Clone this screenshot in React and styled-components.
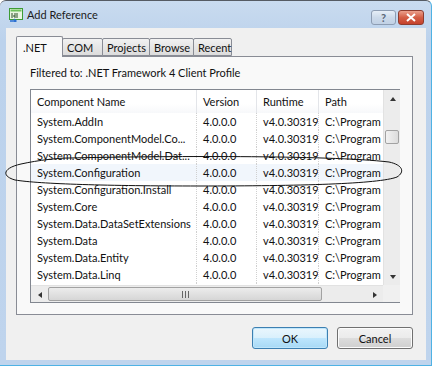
import React from "react";
import styled, { createGlobalStyle } from "styled-components";

const tabsData = [
  { id: 1, name: ".NET", width: 47, active: true },
  { id: 2, name: "COM", width: 41 },
  { id: 3, name: "Projects", width: 48 },
  { id: 4, name: "Browse", width: 45 },
  { id: 5, name: "Recent", width: 39 },
];

const columnsData = [
  { id: 1, name: "Component Name", width: 166 },
  { id: 2, name: "Version", width: 60 },
  { id: 3, name: "Runtime", width: 62 },
  { id: 4, name: "Path", width: 120 },
];

const rowsData = [
  "System.AddIn",
  "System.ComponentModel.Co...",
  "System.ComponentModel.Dat...",
  "System.Configuration",
  "System.Configuration.Install",
  "System.Core",
  "System.Data.DataSetExtensions",
  "System.Data",
  "System.Data.Entity",
  "System.Data.Linq",
  "System.Data.Services.Client",
];

export default function App() {
  return (
    <>
      <Page />
      <Window>
        <TitleBar>
          <TitleIcon viewBox="0 0 14 14" width="14" height="14">
            <rect x="0.5" y="0.5" width="13" height="11" fill="#eaf6e2" stroke="#3d9b35" />
            <rect x="1.5" y="1.5" width="11" height="2" fill="#6cc05a" />
            <path d="M3 5v5M6 5v5M8 5v5M4 8h2" stroke="#2f4f2a" strokeWidth="1" />
            <path d="M1 13h6M5 11l2 2-2 2" stroke="#2a6fd1" strokeWidth="1.4" fill="none" />
          </TitleIcon>
          <Title>Add Reference</Title>
          <Controls>
            <CaptionButton>?</CaptionButton>
            <CaptionButton close>
              <svg width="10" height="9" viewBox="0 0 10 9">
                <path d="M1 1l8 7M9 1l-8 7" stroke="#fff" strokeWidth="2" />
              </svg>
            </CaptionButton>
          </Controls>
        </TitleBar>

        <Client>
          <Tabs>
            {tabsData.map((tab) => (
              <Tab key={tab.id} active={tab.active} width={tab.width}>
                {tab.name}
              </Tab>
            ))}
          </Tabs>
          <Panel>
            <Filter>Filtered to: .NET Framework 4 Client Profile</Filter>
            <ListBox>
              <ListArea>
                <HeaderRow>
                  {columnsData.map((col) => (
                    <HeaderCell key={col.id} width={col.width}>
                      {col.name}
                    </HeaderCell>
                  ))}
                </HeaderRow>
                {rowsData.map((name, i) => (
                  <Row key={name} hot={i === 3}>
                    <Cell width={166}>{name}</Cell>
                    <Cell width={60}>4.0.0.0</Cell>
                    <Cell width={62}>v4.0.30319</Cell>
                    <Cell width={120}>C:\Program Files</Cell>
                  </Row>
                ))}
              </ListArea>
              <VScroll>
                <ArrowButton>
                  <Triangle dir="up" />
                </ArrowButton>
                <VTrack>
                  <VThumb />
                </VTrack>
                <ArrowButton>
                  <Triangle dir="down" />
                </ArrowButton>
              </VScroll>
              <HScroll>
                <ArrowButton>
                  <Triangle dir="left" />
                </ArrowButton>
                <HTrack>
                  <HThumb>
                    <Grip />
                  </HThumb>
                </HTrack>
                <ArrowButton>
                  <Triangle dir="right" />
                </ArrowButton>
              </HScroll>
              <Corner />
            </ListBox>
          </Panel>
          <Buttons>
            <Button primary>OK</Button>
            <Button>Cancel</Button>
          </Buttons>
        </Client>

        <Annotation viewBox="0 0 432 366" width="432" height="366">
          <path
            d="M70 158 C 160 156, 330 155, 390 162 C 404 165, 406 172, 398 177 C 380 184, 300 186, 200 186 C 110 186, 40 184, 16 180 C 2 176, 4 168, 22 164 C 40 160, 60 158, 70 158 Z"
            fill="none"
            stroke="#111"
            strokeWidth="1"
          />
        </Annotation>
      </Window>
    </>
  );
}

const Page = createGlobalStyle`
  html, body {
    margin: 0;
    background: #ffffff;
  }
  body {
    font-family: Lato, "Noto Sans", sans-serif;
    font-size: 11px;
    color: #111;
  }
  * {
    box-sizing: border-box;
  }
`;

const Window = styled.div`
  position: relative;
  width: 432px;
  height: 366px;
  display: flex;
  flex-direction: column;
  padding: 0 5px 5px 6px;
  background: linear-gradient(#c9dbef, #bcd2ec 40px, #bfd4ed);
  border-top: 1px solid #555b63;
  border-right: 1px solid #4fb2e4;
  border-bottom: 1px solid #4fb2e4;
  border-radius: 6px 6px 0 0;
`;

const TitleBar = styled.div`
  height: 27px;
  display: flex;
  align-items: center;
  padding: 0 2px 0 3px;
`;

const TitleIcon = styled.svg`
  flex: none;
  margin-right: 4px;
`;

const Title = styled.div`
  font-size: 11px;
  color: #1b1b1b;
  flex: 1;
`;

const Controls = styled.div`
  display: flex;
  gap: 2px;
  align-self: flex-start;
  margin-top: 9px;
`;

const CaptionButton = styled.div`
  width: ${(p) => (p.close ? 26 : 25)}px;
  height: 15px;
  display: flex;
  align-items: center;
  justify-content: center;
  border: 1px solid ${(p) => (p.close ? "#8e3c2e" : "#8d9db3")};
  border-radius: 3px;
  background: ${(p) =>
    p.close
      ? "linear-gradient(#eba08c, #d45f46 50%, #c5422c)"
      : "linear-gradient(#e6eef7, #ccdaea 50%, #c1d1e5)"};
  color: #5a6778;
  font-weight: bold;
  font-size: 11px;
  line-height: 1;
`;

const Client = styled.div`
  flex: 1;
  display: flex;
  flex-direction: column;
  background: #f0f0f0;
  padding: 8px 13px 10px 10px;
`;

const Tabs = styled.div`
  display: flex;
  height: 20px;
  align-items: flex-end;
  position: relative;
  z-index: 1;
`;

const Tab = styled.div`
  width: ${(p) => p.width}px;
  height: ${(p) => (p.active ? 21 : 18)}px;
  margin-bottom: ${(p) => (p.active ? -1 : 0)}px;
  padding: ${(p) => (p.active ? "1px 0 0 6px" : "0 0 0 4px")};
  display: flex;
  align-items: center;
  border: 1px solid #898c95;
  border-bottom: ${(p) => (p.active ? "none" : "1px solid #898c95")};
  margin-left: ${(p) => (p.active ? 0 : -1)}px;
  background: ${(p) =>
    p.active ? "#f9f9f9" : "linear-gradient(#f2f2f2, #e6e6e6 50%, #dcdcdc)"};
  border-radius: 2px 2px 0 0;
`;

const Panel = styled.div`
  height: 259px;
  border: 1px solid #898c95;
  background: #f9f9f9;
  padding: 7px 12px 12px 13px;
  display: flex;
  flex-direction: column;
`;

const Filter = styled.div`
  height: 17px;
  line-height: 17px;
  margin-bottom: 8px;
`;

const ListBox = styled.div`
  height: 214px;
  border: 1px solid #828790;
  background: #fff;
  display: grid;
  grid-template-columns: 352px 17px;
  grid-template-rows: 195px 17px;
`;

const ListArea = styled.div`
  overflow: hidden;
  background: #fff;
`;

const HeaderRow = styled.div`
  display: flex;
  height: 23px;
  background: linear-gradient(#ffffff, #ffffff 60%, #f7f8fa);
`;

const HeaderCell = styled.div`
  flex: none;
  width: ${(p) => p.width}px;
  padding-left: 6px;
  display: flex;
  align-items: center;
  border-right: 1px solid #e3e5e9;
  white-space: nowrap;
  overflow: hidden;
`;

const Row = styled.div`
  display: flex;
  height: 17px;
  background: ${(p) => (p.hot ? "#f1f6fc" : "transparent")};
`;

const Cell = styled.div`
  flex: none;
  width: ${(p) => p.width}px;
  padding-left: 6px;
  line-height: 17px;
  white-space: nowrap;
  overflow: hidden;
  border-right: 1px dotted #d0d0d0;
`;

const VScroll = styled.div`
  display: flex;
  flex-direction: column;
  background: #ececec;
  border-left: 1px solid #e2e2e2;
`;

const HScroll = styled.div`
  display: flex;
  background: #ececec;
  border-top: 1px solid #e2e2e2;
`;

const Corner = styled.div`
  background: #f0f0f0;
`;

const ArrowButton = styled.div`
  flex: none;
  width: 17px;
  height: 17px;
  display: flex;
  align-items: center;
  justify-content: center;
`;

const Triangle = styled.div`
  width: 0;
  height: 0;
  border: 3px solid transparent;
  ${(p) => p.dir === "up" && "border-bottom: 4px solid #333; border-top-width: 0;"}
  ${(p) => p.dir === "down" && "border-top: 4px solid #333; border-bottom-width: 0;"}
  ${(p) => p.dir === "left" && "border-right: 4px solid #333; border-left-width: 0;"}
  ${(p) => p.dir === "right" && "border-left: 4px solid #333; border-right-width: 0;"}
`;

const VTrack = styled.div`
  flex: 1;
  padding: 23px 1px 0 1px;
`;

const VThumb = styled.div`
  height: 14px;
  border: 1px solid #a2a2a2;
  border-radius: 2px;
  background: linear-gradient(90deg, #f2f2f2, #dcdcdc);
`;

const HTrack = styled.div`
  flex: 1;
  padding: 1px 44px 1px 0;
`;

const HThumb = styled.div`
  height: 100%;
  border: 1px solid #a2a2a2;
  border-radius: 2px;
  background: linear-gradient(#ececec, #d6d6d6);
  display: flex;
  align-items: center;
  justify-content: center;
`;

const Grip = styled.div`
  width: 7px;
  height: 7px;
  background: repeating-linear-gradient(90deg, #666 0 1px, transparent 1px 3px);
`;

const Buttons = styled.div`
  display: flex;
  justify-content: flex-end;
  gap: 9px;
  margin-top: 12px;
`;

const Button = styled.div`
  width: 76px;
  height: 22px;
  display: flex;
  align-items: center;
  justify-content: center;
  border: 1px solid ${(p) => (p.primary ? "#3c7fb1" : "#707070")};
  border-radius: 3px;
  background: ${(p) =>
    p.primary
      ? "linear-gradient(#eaf6fd, #d9f0fc 50%, #bee6fd 51%, #a7d9f5)"
      : "linear-gradient(#f2f2f2, #ebebeb 50%, #dddddd 51%, #cfcfcf)"};
  box-shadow: ${(p) => (p.primary ? "inset 0 0 0 1px #bfe6fb" : "inset 0 0 0 1px #fcfcfc")};
`;

const Annotation = styled.svg`
  position: absolute;
  left: -1px;
  top: -1px;
  pointer-events: none;
`;
